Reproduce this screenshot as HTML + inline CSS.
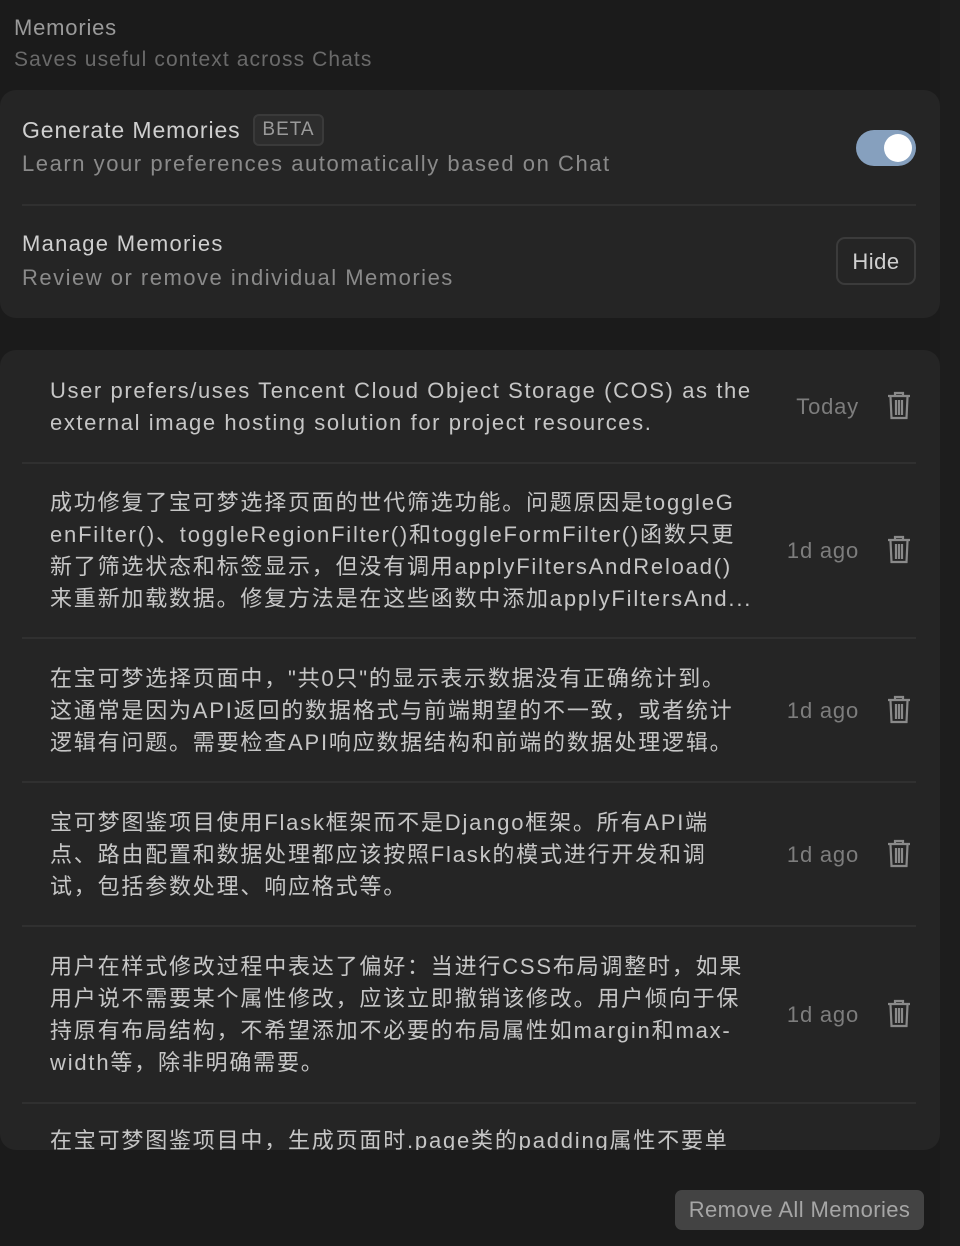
<!DOCTYPE html>
<html><head><meta charset="utf-8"><style>
*{margin:0;padding:0;box-sizing:border-box}
body{width:960px;height:1246px;background:#1b1b1b;font-family:"Liberation Sans","Noto Sans CJK SC",sans-serif;position:relative;overflow:hidden}
.strip{position:absolute;left:940px;top:0;width:20px;height:1246px;background:#1d1d1d}
.t{position:absolute;white-space:nowrap}
.card{position:absolute;left:0;width:940px;background:#252525;border-radius:0 16px 16px 0}
.hr{position:absolute;left:22px;width:894px;height:2px;background:#303030}
.m{position:absolute;left:50px;font-size:22px;line-height:32px;color:#c6c6c6;white-space:nowrap;letter-spacing:1.6px}
.m.c{letter-spacing:1.8px}
.d{position:absolute;right:81px;font-size:22px;color:#7d7d7d;white-space:nowrap;letter-spacing:0.8px}
.tr{position:absolute;left:887px;width:24px;height:30px}
</style></head><body>
<div class="strip"></div>
<div class="t" style="left:14px;top:15px;font-size:22px;color:#9a9a9a;letter-spacing:0.8px">Memories</div>
<div class="t" style="left:14px;top:48px;font-size:21px;color:#6a6a6a;letter-spacing:1.1px">Saves useful context across Chats</div>

<div class="card" style="top:90px;height:228px;border-radius:16px">
  <div class="t" style="left:22px;top:27px;font-size:23px;color:#cfcfcf;letter-spacing:0.9px">Generate Memories</div>
  <div class="t" style="left:253px;top:24px;height:32px;width:71px;border:2px solid #3a3a3a;background:#2d2d2d;border-radius:6px;font-size:19px;color:#9a9a9a;text-align:center;line-height:28px;letter-spacing:1px">BETA</div>
  <div class="t" style="left:22px;top:61px;font-size:22px;color:#8a8a8a;letter-spacing:1.55px">Learn your preferences automatically based on Chat</div>
  <div style="position:absolute;left:856px;top:40px;width:60px;height:36px;border-radius:18px;background:#86a0be"></div>
  <div style="position:absolute;left:884px;top:44px;width:28px;height:28px;border-radius:14px;background:#fff"></div>
  <div class="hr" style="top:114px"></div>
  <div class="t" style="left:22px;top:141px;font-size:22px;color:#cfcfcf;letter-spacing:1.3px">Manage Memories</div>
  <div class="t" style="left:22px;top:175px;font-size:22px;color:#8a8a8a;letter-spacing:1.5px">Review or remove individual Memories</div>
  <div class="t" style="left:836px;top:147px;width:80px;height:48px;border:2px solid #3b3b3b;border-radius:9px;font-size:22px;color:#d0d0d0;text-align:center;line-height:46px;letter-spacing:0.5px">Hide</div>
</div>

<div class="card" style="top:350px;height:800px;border-radius:16px;overflow:hidden">
  <div class="m" style="top:25px">User prefers/uses Tencent Cloud Object Storage (COS) as the<br>external image hosting solution for project resources.</div>
  <div class="d" style="top:44px">Today</div>
  <div class="hr" style="top:112px"></div>
  <div class="m c" style="top:137px">成功修复了宝可梦选择页面的世代筛选功能。问题原因是toggleG<br>enFilter()、toggleRegionFilter()和toggleFormFilter()函数只更<br>新了筛选状态和标签显示，但没有调用applyFiltersAndReload()<br>来重新加载数据。修复方法是在这些函数中添加applyFiltersAnd...</div>
  <div class="d" style="top:188px">1d ago</div>
  <div class="hr" style="top:287px"></div>
  <div class="m c" style="top:313px">在宝可梦选择页面中，"共0只"的显示表示数据没有正确统计到。<br>这通常是因为API返回的数据格式与前端期望的不一致，或者统计<br>逻辑有问题。需要检查API响应数据结构和前端的数据处理逻辑。</div>
  <div class="d" style="top:348px">1d ago</div>
  <div class="hr" style="top:431px"></div>
  <div class="m c" style="top:457px">宝可梦图鉴项目使用Flask框架而不是Django框架。所有API端<br>点、路由配置和数据处理都应该按照Flask的模式进行开发和调<br>试，包括参数处理、响应格式等。</div>
  <div class="d" style="top:492px">1d ago</div>
  <div class="hr" style="top:575px"></div>
  <div class="m c" style="top:601px">用户在样式修改过程中表达了偏好：当进行CSS布局调整时，如果<br>用户说不需要某个属性修改，应该立即撤销该修改。用户倾向于保<br>持原有布局结构，不希望添加不必要的布局属性如margin和max-<br>width等，除非明确需要。</div>
  <div class="d" style="top:652px">1d ago</div>
  <div class="hr" style="top:752px"></div>
  <div class="m c" style="top:775px">在宝可梦图鉴项目中，生成页面时.page类的padding属性不要单</div>
</div>

<svg width="0" height="0" style="position:absolute"><defs><g id="tr" fill="none" stroke="#8a8a8a" stroke-width="2.2"><path d="M1 6H23"/><path d="M8 6V3H16V6"/><path d="M3.5 7L4.5 28H19.5L20.5 7"/><path d="M9 10V25M12 10V25M15 10V25"/></g></defs></svg>
<svg class="tr" style="top:390px" viewBox="0 0 24 30"><use href="#tr"/></svg>
<svg class="tr" style="top:534px" viewBox="0 0 24 30"><use href="#tr"/></svg>
<svg class="tr" style="top:694px" viewBox="0 0 24 30"><use href="#tr"/></svg>
<svg class="tr" style="top:838px" viewBox="0 0 24 30"><use href="#tr"/></svg>
<svg class="tr" style="top:998px" viewBox="0 0 24 30"><use href="#tr"/></svg>

<div class="t" style="left:675px;top:1190px;width:249px;height:40px;background:#434343;border-radius:7px;font-size:22px;color:#a6a6a6;text-align:center;line-height:40px;letter-spacing:0.4px">Remove All Memories</div>
</body></html>
